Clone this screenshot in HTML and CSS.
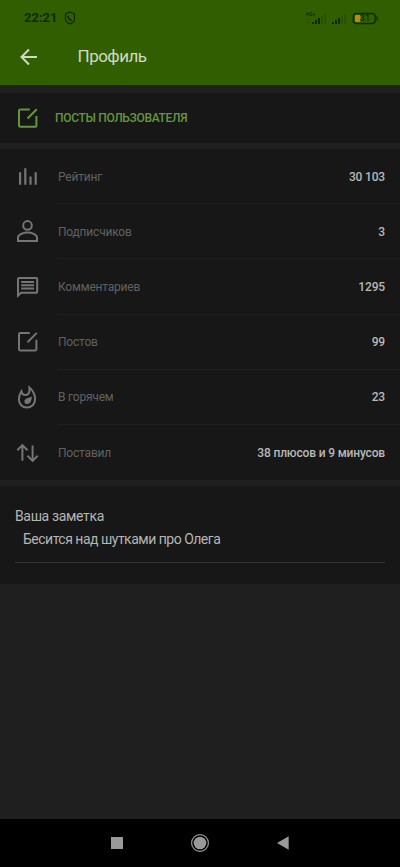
FILE: index.html
```html
<!DOCTYPE html>
<html lang="ru">
<head>
<meta charset="utf-8">
<title>Профиль</title>
<link rel="stylesheet" href="styles.css">
</head>
<body>
<div class="screen">
  <header class="header">
    <div class="status">
      <span class="clock">22:21</span>
      <svg class="shield" width="12" height="14" viewBox="0 0 12 14"><path d="M6 1 10.5 3V8C10.5 10.3 8.7 11.9 6 12.9 3.3 11.9 1.5 10.3 1.5 8V3Z" fill="none" stroke="currentColor" stroke-width="1.2"/><path d="M4.2 4.7C4 7.2 5.5 9 7.9 9.3" fill="none" stroke="currentColor" stroke-width="1.5"/></svg>
      <svg class="signals" width="74" height="16" viewBox="0 0 74 16">
        <text class="network" x="0.5" y="6.3">4G+</text>
        <path d="M1.5 9.5h3M1.5 12.5h3" stroke="#234d00" stroke-width="1"/>
        <path d="M8 14v-2M11 14v-4M14 14v-6M28 14v-2M31 14v-4M34 14v-6" stroke="#112800" stroke-width="2"/>
        <path d="M17 14V6M20.3 14V4M37 14V6M40.3 14V4" stroke="#264f00" stroke-width="1.7"/>
        <rect x="48.4" y="3.4" width="21.8" height="10" rx="3" fill="none" stroke="#142d00" stroke-width="1.5"/>
        <rect x="50" y="4.9" width="5.5" height="7" rx="1" fill="#b48b19"/>
        <path d="M72 6.4v4" stroke="#142d00" stroke-width="1.5"/>
        <text class="charge" x="54.8" y="11.4">31</text>
      </svg>
    </div>
    <div class="toolbar">
      <svg width="18" height="18" viewBox="0 0 18 18"><path d="M17 9H2M9 1.5 1.5 9 9 16.5" fill="none" stroke="currentColor" stroke-width="2"/></svg>
      <h1>Профиль</h1>
    </div>
  </header>

  <section class="posts">
    <svg class="icon" viewBox="0 0 28 28"><path d="M15.8 5.4H6.2a1.2 1.2 0 0 0-1.2 1.2v15a1.2 1.2 0 0 0 1.2 1.2h15a1.2 1.2 0 0 0 1.2-1.2v-9.5M13.5 14.5 22.8 5.2" class="line"/></svg>
    <span>ПОСТЫ ПОЛЬЗОВАТЕЛЯ</span>
  </section>

  <section class="stats">
    <div class="row">
      <svg class="icon" viewBox="0 0 28 28"><path d="M6.1 9.2v12.6M11.3 5.3v16.5M16.5 13.4v8.4M21.7 9.2v12.6" class="bars"/></svg>
      <div class="cell"><span class="label">Рейтинг</span><span class="value">30 103</span></div>
    </div>
    <div class="row">
      <svg class="icon" viewBox="0 0 28 28"><circle cx="13.5" cy="7.4" r="4.3" class="line"/><path d="M4 23.1v-3.4c0-3.2 5.5-5.1 9.5-5.1s9.5 1.9 9.5 5.1v3.4Z" class="line"/></svg>
      <div class="cell"><span class="label">Подписчиков</span><span class="value">3</span></div>
    </div>
    <div class="row">
      <svg class="icon" viewBox="0 0 28 28"><path d="M4 22.7V6a1 1 0 0 1 1-1h17.2a1 1 0 0 1 1 1v12.8a1 1 0 0 1-1 1H7Z" class="line"/><path d="M7.2 9.1h12.9M7.2 12.3h12.9M7.2 15.5h12.9" class="line"/></svg>
      <div class="cell"><span class="label">Комментариев</span><span class="value">1295</span></div>
    </div>
    <div class="row">
      <svg class="icon" viewBox="0 0 28 28"><path d="M15.8 5.1H6.2A1.2 1.2 0 0 0 5 6.3v15a1.2 1.2 0 0 0 1.2 1.2h15a1.2 1.2 0 0 0 1.2-1.2v-9.5M13.5 14.2 22.8 4.9" class="line"/></svg>
      <div class="cell"><span class="label">Постов</span><span class="value">99</span></div>
    </div>
    <div class="row">
      <svg class="icon" viewBox="0 0 28 28"><path d="M7.4 8.2C5.5 11 4.9 13.8 4.9 16.5c0 4.5 3.5 8 8 8s8.2-3.5 8.2-8.2c0-4.8-2-8.5-5.7-11.7.5 4.4-.7 7.4-3.8 7.4-2.4 0-3.7-1.4-4.2-3.8Z" class="line"/><path d="M17.8 13.6c-1.5 1-3 1.2-4.4 1.7-2 .6-3 1.6-3 3.1 0 1.6 1.2 2.7 2.9 2.7 2.8 0 4.6-3 4.5-7.5Z" fill="currentColor"/></svg>
      <div class="cell"><span class="label">В горячем</span><span class="value">23</span></div>
    </div>
    <div class="row">
      <svg class="icon" viewBox="0 0 28 28"><path d="M8.4 21.7V6.4M3.3 11.2 8.4 6.1l5.1 5.1M18.6 6.4v15.2M13.5 16.8l5.1 5.1 5.1-5.1" class="line"/></svg>
      <div class="cell"><span class="label">Поставил</span><span class="value">38 плюсов и 9 минусов</span></div>
    </div>
  </section>

  <section class="note">
    <div class="note-title">Ваша заметка</div>
    <div class="note-text">Бесится над шутками про Олега</div>
  </section>

  <nav class="navbar">
    <svg width="20" height="20" viewBox="0 0 20 20"><path d="M4 4h12v12H4Z" fill="currentColor"/></svg>
    <svg width="20" height="20" viewBox="0 0 20 20"><circle cx="10" cy="10" r="8.4" fill="none" stroke="currentColor" stroke-width="1.2"/><circle cx="10" cy="10" r="6.3" fill="currentColor"/></svg>
    <svg width="20" height="20" viewBox="0 0 20 20"><path d="M4 10 15.7 3.2v13.6Z" fill="currentColor"/></svg>
  </nav>
</div>
</body>
</html>
```
FILE: styles.css
```css
* { box-sizing: border-box; }
body {
  margin: 0;
  background: #1f1f1f;
  font-family: Roboto, "Noto Sans", sans-serif;
}
.screen {
  display: flex;
  flex-direction: column;
  height: 867px;
  overflow: hidden;
}
.header {
  height: 85px;
  background: #315f00;
}
.status {
  display: flex;
  align-items: center;
  height: 35px;
  padding: 0 21px 0 24px;
  color: #122900;
}
.clock {
  width: 33px;
  font-size: 13px;
  font-weight: 700;
}
.shield { margin-left: 7px; }
.signals { margin-left: auto; }
.network { font-size: 5.5px; font-weight: 700; fill: #142d00; }
.charge { font-size: 9px; font-weight: 500; fill: #142d00; }
.toolbar {
  display: flex;
  align-items: center;
  gap: 40px;
  height: 44px;
  padding-left: 20px;
  color: #d0d9c6;
}
h1 {
  margin: -2px 0 0 -0.5px;
  font-size: 17px;
  font-weight: 400;
  letter-spacing: -0.5px;
}
.icon {
  flex: none;
  width: 28px;
  height: 28px;
}
.line {
  fill: none;
  stroke: currentColor;
  stroke-width: 2;
}
.bars {
  fill: none;
  stroke: currentColor;
  stroke-width: 2.2;
}
.posts {
  display: flex;
  align-items: center;
  gap: 13px;
  height: 49.5px;
  margin-top: 8px;
  padding-left: 14px;
  background: #171717;
  color: #65963c;
  font-size: 12px;
  font-weight: 500;
  letter-spacing: -0.32px;
}
.stats {
  margin-top: 6.5px;
  background: #171717;
}
.row {
  display: flex;
  align-items: center;
  gap: 15px;
  height: 55.2px;
  padding-left: 14px;
  color: #757575;
}
.cell {
  display: flex;
  flex: 1;
  align-items: center;
  justify-content: space-between;
  height: 100%;
  padding: 1px 15px 0 1px;
  border-bottom: 1px solid #202020;
  font-size: 12px;
  letter-spacing: -0.2px;
}
.row:last-child .cell { border-bottom-color: transparent; }
.label { color: #616161; }
.value { color: #b8b8b8; font-weight: 500; letter-spacing: -0.16px; }
.note {
  height: 98px;
  margin-top: 6px;
  padding: 20px 15px 0;
  background: #171717;
  color: #b5b5b5;
  font-size: 14px;
  letter-spacing: -0.5px;
  line-height: 20px;
}
.note-title { letter-spacing: -0.35px; }
.note-text {
  height: 36px;
  padding: 2px 8px 0;
  margin-top: 1px;
  border-bottom: 1px solid #323232;
}
.navbar {
  display: flex;
  align-items: center;
  justify-content: center;
  gap: 63px;
  height: 48px;
  margin-top: auto;
  background: #000;
  color: #999;
}
```
